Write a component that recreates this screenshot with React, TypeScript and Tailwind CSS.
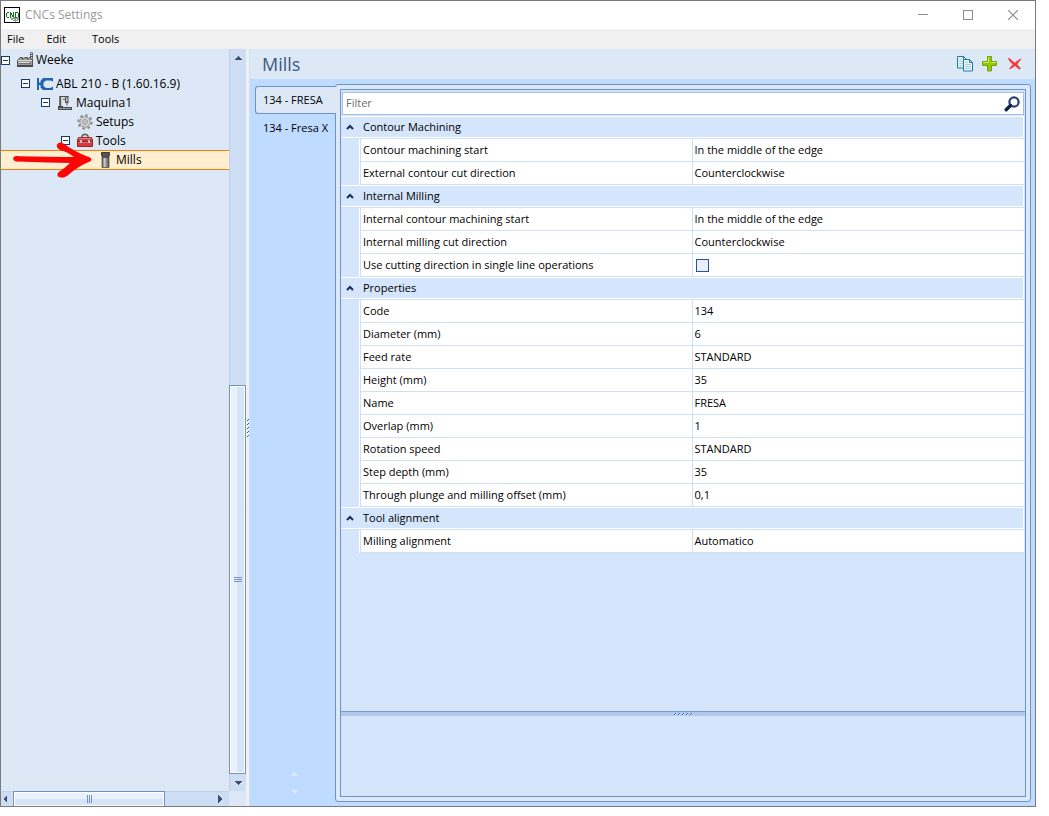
import { useState, type ReactNode } from 'react';

const Caret = ({ dir, className = 'fill-[#434e6e]' }: { dir: 'up' | 'down' | 'left' | 'right'; className?: string }) => {
  const d = {
    up: 'M0 6L4 2L8 6Z',
    down: 'M0 2L4 6L8 2Z',
    left: 'M6 0L2 4L6 8Z',
    right: 'M2 0L6 4L2 8Z',
  }[dir];
  return (
    <svg viewBox="0 0 8 8" className={`size-2 shrink-0 ${className}`} shapeRendering="crispEdges">
      <path d={d} />
    </svg>
  );
};

const AppIcon = () => (
  <svg viewBox="0 0 16 16" className="size-4 shrink-0" shapeRendering="crispEdges">
    <rect x="0.5" y="0.5" width="15" height="15" fill="#fff" stroke="#000" />
    <path
      d="M2 6h1v4h-1zM3 5h2v1h-2zM3 10h2v1h-2zM6 5h1v6h-1zM7 6h1v2h-1zM8 8h1v2h-1zM9 5h1v6h-1zM11 5h1v6h-1zM12 5h2v1h-2zM14 6h1v4h-1zM12 10h2v1h-2z"
      fill="#0b7a16"
    />
    <path d="M7 11h2v-1h2v1h2v-1h2v3h-1v1h-2v1h-1v-1h-2v-1h-2z" fill="#9a9a9a" />
    <path d="M9 12h1v1h-1zM12 12h1v1h-1z" fill="#fff" />
  </svg>
);

const FactoryIcon = () => (
  <svg viewBox="0 0 16 16" className="size-4 shrink-0">
    <path d="M13.500 10V.5h2V10" fill="#eee" stroke="#777" />
    <path d="M13 2.500h3M13 4.500h3" stroke="#555" />
    <path d="M.5 14.500V8.500L3 5.500h2.500V7.500L8 5.500h2.500V7.500l2-2h1.500v2h1.500v7z" fill="#9c9c9c" stroke="#555" />
    <path d="M1 8.500h14M2 10.500h10" stroke="#dcdcdc" />
    <path d="M2 11.500h12" stroke="#777" />
    <path d="M0 14h16" stroke="#484848" strokeWidth="2" />
  </svg>
);

const CncIcon = () => (
  <svg viewBox="0 0 16 12" className="h-3 w-4 shrink-0">
    <path d="M0 0h2v4.500h1.500V3L6 0h10v3.500L13.500 2.500H9L6.500 4.500v3.500L9 10h4.500l2.500-1.500V12H6L3.500 9.500V7H2v5H0z" fill="#2463ad" />
  </svg>
);

const MachineIcon = () => (
  <svg viewBox="0 0 16 16" className="size-4 shrink-0">
    <path d="M2 1.500h9.500M3.500 1.500V12" stroke="#505050" strokeWidth="1.200" />
    <path d="M2 1h1v11H2z" fill="#777" />
    <path d="M4 2h4v2H5.500v8H4z" fill="#d5d5d5" />
    <path d="M6 4.500h2.500" stroke="#666" />
    <path d="M8 1h3.500v7h-1v2.500h-1V8H8z" fill="#555" />
    <path d="M9 2.500h1.500v4H9z" fill="#bbb" />
    <path d="M1 11h5v1h9v3H1z" fill="#4a4a4a" />
    <path d="M2 13.500h12" stroke="#999" />
  </svg>
);

const GearIcon = () => (
  <svg viewBox="0 0 16 16" className="size-4 shrink-0">
    <circle cx="8" cy="8" r="6.700" fill="none" stroke="#8c8c8c" strokeWidth="2" strokeDasharray="2.630 2.630" />
    <circle cx="8" cy="8" r="5.200" fill="#d4d4d4" stroke="#969696" />
    <circle cx="8" cy="8" r="2.300" fill="#eee" stroke="#888" />
    <circle cx="8" cy="8" r="1" fill="#a5a5a5" />
  </svg>
);

const ToolboxIcon = () => (
  <svg viewBox="0 0 16 16" className="size-4 shrink-0">
    <path d="M5 4.500V3L6.500 1.500h3L11 3v1.500" fill="none" stroke="#555" strokeWidth="1.400" />
    <path d="M1.500 4.500h13l1 2.500v6.500H.5V7z" fill="#d63a3a" stroke="#a32626" />
    <path d="M2 5.500h12" stroke="#f08a8a" />
    <path d="M0 8.500h16" stroke="#8d2020" />
    <path d="M1 9.500h14" stroke="#ee6b6b" />
    <path d="M3 7h2v3H3zM11 7h2v3h-2z" fill="#f2f2f2" stroke="#777" strokeWidth=".5" />
  </svg>
);

const MillIcon = () => (
  <svg viewBox="0 0 16 16" className="size-4 shrink-0">
    <defs>
      <linearGradient id="mill">
        <stop stopColor="#555" />
        <stop offset=".35" stopColor="#c8c8c8" />
        <stop offset="1" stopColor="#4c4c4c" />
      </linearGradient>
    </defs>
    <path d="M5 5h7v10.500H5z" fill="url(#mill)" stroke="#444" strokeWidth=".7" />
    <path d="M4.500.5h8v3l-1 1.500h-6l-1-1.500z" fill="#555" stroke="#3c3c3c" />
  </svg>
);

const CopyIcon = () => (
  <svg viewBox="0 0 16 16" className="size-4">
    <path d="M.5.500h6l3 3v8.500h-9z" fill="#e8f5fb" stroke="#1c77b2" />
    <path d="M2 3.500h3M2 5.500h4M2 7.500h5M2 9.500h5" stroke="#a5d0e4" />
    <path d="M6.500 3.500h6l3 3v8.500h-9z" fill="#e8f5fb" stroke="#1c77b2" />
    <path d="M8 6.500h3M8 8.500h6M8 10.500h6M8 12.500h6" stroke="#a5d0e4" />
    <path d="M12.500 3.500v3h3M6.500.500v3" fill="none" stroke="#1c77b2" />
  </svg>
);

const PlusIcon = () => (
  <svg viewBox="0 0 16 16" className="size-4">
    <path d="M5.500.500h4v5h5v4h-5v5.500h-4V9.500h-5v-4h5z" fill="#91c900" stroke="#75a313" />
    <path d="M6.500 1.500v5h-5M14 6.500H9" fill="none" stroke="#d4ef68" />
  </svg>
);

const DeleteIcon = () => (
  <svg viewBox="0 0 16 16" className="size-4">
    <path
      d="M1.500 2.500Q3 2 5 5l3 2.200Q11 4 14 3L9.800 8.300 13.500 12.500 12 13 8 9.500Q5 12 2.500 13L6.200 8.300Q2 5 1.500 2.500z"
      fill="#f33535"
      stroke="#f33535"
      strokeWidth=".8"
      strokeLinejoin="round"
    />
  </svg>
);

const SearchIcon = () => (
  <svg viewBox="0 0 16 16" className="size-4">
    <circle cx="10" cy="6" r="4.600" fill="#fff" stroke="#27426f" strokeWidth="2.200" />
    <path d="M6.500 9.500L2.200 13.800" stroke="#0f2145" strokeWidth="3.400" strokeLinecap="round" />
  </svg>
);

const Grip = ({ vertical = false }: { vertical?: boolean }) => (
  <span className={vertical ? 'flex flex-col gap-0.5' : 'flex gap-0.5'}>
    {[0, 1, 2, 3, 4].map((i) => (
      <svg key={i} viewBox="0 0 2 2" className="size-0.5" shapeRendering="crispEdges">
        <path d="M1 0h1v1h-1zM0 1h1v1h-1z" fill="#2464c8" />
        {!vertical && <path d="M1 1h1v1h-1z" fill="#fff" />}
      </svg>
    ))}
  </span>
);

const Expander = () => (
  <button aria-label="Collapse" className="mr-[7px] flex size-[9px] shrink-0 items-center justify-center border border-[#19386c] bg-white">
    <span className="h-px w-[5px] bg-[#19386c]" />
  </button>
);

const TreeRow = ({ icon, label, className, leaf }: { icon: ReactNode; label: string; className: string; leaf?: boolean }) => (
  <li className={`flex items-center ${className}`}>
    {!leaf && <Expander />}
    {icon}
    <span className="ml-[3px] whitespace-nowrap">{label}</span>
  </li>
);

type Row = [string, string | boolean];
const groups: { title: string; rows: Row[] }[] = [
  {
    title: 'Contour Machining',
    rows: [
      ['Contour machining start', 'In the middle of the edge'],
      ['External contour cut direction', 'Counterclockwise'],
    ],
  },
  {
    title: 'Internal Milling',
    rows: [
      ['Internal contour machining start', 'In the middle of the edge'],
      ['Internal milling cut direction', 'Counterclockwise'],
      ['Use cutting direction in single line operations', false],
    ],
  },
  {
    title: 'Properties',
    rows: [
      ['Code', '134'],
      ['Diameter (mm)', '6'],
      ['Feed rate', 'STANDARD'],
      ['Height (mm)', '35'],
      ['Name', 'FRESA'],
      ['Overlap (mm)', '1'],
      ['Rotation speed', 'STANDARD'],
      ['Step depth (mm)', '35'],
      ['Through plunge and milling offset (mm)', '0,1'],
    ],
  },
  { title: 'Tool alignment', rows: [['Milling alignment', 'Automatico']] },
];

function PropertyGrid() {
  return (
    <table className="w-full table-fixed border-separate border-spacing-0 text-left text-[11px] leading-4">
      <colgroup>
        <col className="w-5" />
        <col />
        <col />
      </colgroup>
      {groups.map((g) => (
        <tbody key={g.title}>
          <tr className="h-[23px]">
            <th colSpan={3} className="border-b border-[#cfdff5] p-0 font-normal">
              <button className="flex h-[22px] w-full items-center border-y border-r border-white text-left">
                <span className="flex w-[22px] pl-[5px]">
                  <svg viewBox="0 0 8 6" className="h-1.5 w-2">
                    <path d="M1 5L4 2L7 5" fill="none" stroke="#15305f" strokeWidth="2" />
                  </svg>
                </span>
                {g.title}
              </button>
            </th>
          </tr>
          {g.rows.map(([label, value]) => (
            <tr key={label} className="h-[23px]">
              <td className="border-r border-[#cfdff5] p-0">
                <div className="h-[23px] border-r border-white" />
              </td>
              <th scope="row" className="border-r border-b border-[#cfdff5] bg-white p-0 pl-0.5 font-normal">
                {typeof value === 'boolean' ? <label htmlFor="single-line">{label}</label> : label}
              </th>
              <td className="border-b border-[#cfdff5] bg-white p-0 pl-0.5">
                {typeof value === 'boolean' ? (
                  <input
                    id="single-line"
                    type="checkbox"
                    defaultChecked={value}
                    className="ml-px block size-[13px] appearance-none border border-[#24558d] bg-[#eaeef8] checked:bg-[#24558d]"
                  />
                ) : (
                  value
                )}
              </td>
            </tr>
          ))}
        </tbody>
      ))}
    </table>
  );
}

function Sidebar() {
  return (
    <aside className="grid w-[245px] shrink-0 grid-cols-[1fr_17px] grid-rows-[1fr_15px] bg-[#dde8f6]">
      <div className="relative min-h-0">
        <ul className="text-[12px] leading-4">
          <TreeRow className="mb-[3px] h-[22px]" icon={<FactoryIcon />} label="Weeke" />
          <TreeRow className="h-[19px] pl-5" icon={<CncIcon />} label="ABL 210 - B (1.60.16.9)" />
          <TreeRow className="h-[19px] pl-10" icon={<MachineIcon />} label="Maquina1" />
          <TreeRow className="h-[19px] pl-[76px]" icon={<GearIcon />} label="Setups" leaf />
          <TreeRow className="h-[19px] pl-[60px]" icon={<ToolboxIcon />} label="Tools" />
          <TreeRow className="h-5 border-y border-[#f57d0c] bg-[#ffefd0] pl-24" icon={<MillIcon />} label="Mills" leaf />
        </ul>
        <svg viewBox="0 0 82 38" className="pointer-events-none absolute top-[93px] left-[11px] h-[38px] w-[82px]">
          <path
            d="M4 14Q22 14.500 62 15Q56 10 48 8Q43 5 45.500 2Q48 -1 53 2.500Q63 10 78 15.500Q81 17.500 78 19.500Q66 24 55 34Q50 37 46 34.500Q44 31 49 28.500Q54 25 58 21Q40 20.500 4 19.500Q1 18.500 1 16.500Q1.500 14 4 14Z"
            fill="#fb0505"
          />
        </svg>
      </div>
      <div className="flex min-h-0 flex-col items-center border-l border-[#bfd1ec] bg-[#cdddf4]">
        <button aria-label="Scroll up" className="flex h-[17px] w-full items-center justify-center">
          <Caret dir="up" />
        </button>
        <div className="flex-[320]" />
        <div className="-ml-px flex w-[17px] flex-[388] flex-col items-center justify-center gap-px border border-[#7591bd] bg-linear-to-r from-[#e9f1fc] from-45% to-[#d5e4f7] to-45% shadow-[inset_0_0_0_1px_#fff]">
          <span className="h-px w-2 bg-[#7591bd]" />
          <span className="h-px w-2 bg-[#7591bd]" />
          <span className="h-px w-2 bg-[#7591bd]" />
        </div>
        <button aria-label="Scroll down" className="flex h-[17px] w-full items-center justify-center">
          <Caret dir="down" />
        </button>
      </div>
      <div className="flex items-stretch border-t border-[#bfd1ec] bg-[#cdddf4]">
        <button aria-label="Scroll left" className="flex w-3 items-center">
          <Caret dir="left" />
        </button>
        <div className="-mt-px flex w-[152px] items-center justify-center gap-px border border-b-0 border-[#7591bd] bg-linear-to-b from-[#e9f1fc] from-50% to-[#d5e4f7] to-50% shadow-[inset_0_0_0_1px_#fff]">
          <span className="h-2 w-px bg-[#7591bd]" />
          <span className="h-2 w-px bg-[#7591bd]" />
          <span className="h-2 w-px bg-[#7591bd]" />
        </div>
        <button aria-label="Scroll right" className="ml-auto flex w-[13px] items-center">
          <Caret dir="right" />
        </button>
      </div>
    </aside>
  );
}

function ToolTabs({ active, onSelect }: { active: number; onSelect: (i: number) => void }) {
  const names = ['134 - FRESA', '134 - Fresa X'];
  return (
    <div role="tablist" className="z-10 -mr-px flex w-[81px] shrink-0 flex-col pt-0.5 text-[11px]">
      {names.map((name, i) => (
        <button
          key={name}
          role="tab"
          aria-selected={i === active}
          onClick={() => onSelect(i)}
          className={`flex h-7 items-center text-left whitespace-nowrap ${
            i === active ? 'rounded-l-[3px] border border-r-0 border-[#6b93d1] bg-[#dde8f6] pl-[7px]' : 'mr-px pl-2'
          }`}
        >
          {name}
        </button>
      ))}
      <div className="mt-auto mb-1.5 flex flex-col items-center gap-2.5 pr-1">
        <Caret dir="up" className="fill-[#dceafe]" />
        <Caret dir="down" className="fill-[#dceafe]" />
      </div>
    </div>
  );
}

export default function App() {
  const [active, setActive] = useState(0);
  return (
    <div className="h-screen bg-white pr-[13px] pb-[9px] font-['Open_Sans','Noto_Sans',sans-serif] text-black">
      <div className="flex h-full flex-col border border-[#7a7a7a]">
        <header className="flex h-7 shrink-0 items-center pl-[3px]">
          <AppIcon />
          <h1 className="ml-[5px] text-[12px] leading-4 text-[#999]">CNCs Settings</h1>
          <div className="ml-auto flex text-[#8c8c8c]">
            <button aria-label="Minimize" className="flex h-6 w-[45px] items-center justify-center">
              <svg viewBox="0 0 10 10" className="size-2.5"><path d="M0 4.500h10" stroke="currentColor" /></svg>
            </button>
            <button aria-label="Maximize" className="flex h-6 w-[45px] items-center justify-center">
              <svg viewBox="0 0 10 10" className="size-2.5"><rect x=".5" y=".5" width="9" height="9" fill="none" stroke="currentColor" /></svg>
            </button>
            <button aria-label="Close" className="flex h-6 w-[45px] items-center justify-center">
              <svg viewBox="0 0 10 10" className="size-2.5"><path d="M0 0L10 10M10 0L0 10" stroke="currentColor" strokeWidth="1.200" /></svg>
            </button>
          </div>
        </header>
        <nav className="flex h-5 shrink-0 items-center gap-[22px] bg-[#f0f0f0] pl-1.5 text-[11px]">
          <button>File</button>
          <button>Edit</button>
          <button className="ml-1">Tools</button>
        </nav>
        <div className="flex min-h-0 flex-1">
          <Sidebar />
          <div className="flex w-[3px] shrink-0 items-center bg-[#f0f0f0] pl-px">
            <Grip vertical />
          </div>
          <main className="flex min-w-0 flex-1 flex-col border-l border-[#cfe0fa] bg-[#bfdbff]">
            <div className="flex h-[30px] shrink-0 items-center bg-[#dde8f6] pr-3 pl-3">
              <h2 className="text-[18px] text-[#3b5a82]">Mills</h2>
              <div className="ml-auto flex gap-[9px]">
                <button aria-label="Copy"><CopyIcon /></button>
                <button aria-label="Add"><PlusIcon /></button>
                <button aria-label="Delete"><DeleteIcon /></button>
              </div>
            </div>
            <div className="flex min-h-0 flex-1 pt-[5px] pr-1 pb-1 pl-[5px]">
              <ToolTabs active={active} onSelect={setActive} />
              <section className="min-w-0 flex-1 rounded-[3px] border border-[#6b93d1] bg-[#dde8f6] p-1">
                <div className="flex h-full flex-col border border-[#6b93d1] bg-[#d4e5fc]">
                  <div className="mx-px mt-0.5 mb-px flex h-[23px] shrink-0 items-center border border-[#a3c0e8] bg-white pr-[3px]">
                    <input
                      aria-label="Filter"
                      placeholder="Filter"
                      className="min-w-0 flex-1 pl-[3px] text-[11px] outline-none placeholder:text-[#6d6d6d]"
                    />
                    <button aria-label="Search"><SearchIcon /></button>
                  </div>
                  <div className="min-h-0 flex-1 pr-px">
                    <PropertyGrid />
                  </div>
                  <div className="flex h-[5px] shrink-0 items-center justify-center border-t border-[#769cd2] bg-[#b4c9e9]">
                    <Grip />
                  </div>
                  <div className="h-20 shrink-0" />
                </div>
              </section>
            </div>
          </main>
        </div>
      </div>
    </div>
  );
}
